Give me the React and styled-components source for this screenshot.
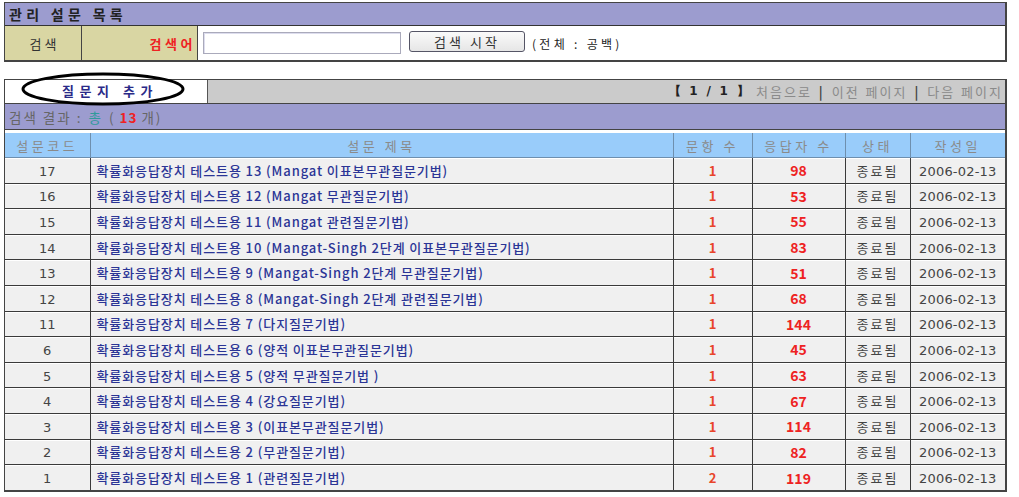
import React from "react";
import styled, { createGlobalStyle } from "styled-components";

const Global = createGlobalStyle`
  html, body { margin: 0; padding: 0; background: #ffffff; }
  body { font-family: "Noto Sans CJK KR", "Noto Sans", sans-serif; font-size: 13px; color: #333; }
`;

const Page = styled.div`
  width: 1019px;
  height: 497px;
  padding: 2px 0 0 4px;
  box-sizing: border-box;
  position: relative;
  display: flex;
  flex-direction: column;
  gap: 17px;
`;

const Box = styled.div`
  width: 1003px;
  box-sizing: border-box;
  border: 1px solid #444;
  border-right-width: 2px;
  border-bottom-width: 2px;
  display: flex;
  flex-direction: column;
`;

const TitleBar = styled.div`
  height: 22px;
  background: #9c9ccf;
  border-bottom: 1px solid #333;
  display: flex;
  align-items: center;
  padding-left: 4px;
  font-weight: 700;
  color: #222;
  font-size: 14px;
  letter-spacing: 4.3px;
`;

const SearchRow = styled.div`
  height: 34px;
  display: flex;
  align-items: center;
  background: #fff;
`;

const LabelCell = styled.div`
  width: ${(p) => p.$w}px;
  height: 100%;
  box-sizing: border-box;
  background: #d9d6a3;
  border-right: 1px solid #444;
  display: flex;
  align-items: center;
  justify-content: ${(p) => (p.$right ? "flex-end" : "center")};
  padding-right: ${(p) => (p.$right ? 1 : 0)}px;
  padding-left: ${(p) => (p.$right ? 0 : 3)}px;
  color: ${(p) => (p.$red ? "#ee2222" : "#333")};
  font-weight: ${(p) => (p.$red ? 700 : 400)};
  letter-spacing: ${(p) => (p.$red ? 3.5 : 3)}px;
`;

const Input = styled.div`
  width: 196px;
  height: 20px;
  margin-left: 5px;
  border: 1px solid #aab;
  box-shadow: inset 1px 1px 0 #dde;
  background: #fff;
`;

const Button = styled.div`
  width: 114px;
  height: 19px;
  margin-left: 8px;
  margin-top: -3px;
  border: 1px solid #556;
  border-radius: 3px;
  background: linear-gradient(#fafafa, #e6e6e6);
  display: flex;
  align-items: center;
  justify-content: center;
  letter-spacing: 3px;
  color: #333;
`;

const Note = styled.span`
  margin-left: 7px;
  font-size: 12px;
  color: #222;
  letter-spacing: 3.3px;
`;

const TabRow = styled.div`
  height: 23px;
  display: flex;
  border-bottom: 1px solid #444;
`;

const AddTab = styled.div`
  width: 203px;
  box-sizing: border-box;
  border-right: 1px solid #555;
  background: #fff;
  display: flex;
  align-items: center;
  justify-content: center;
  padding-left: 8px;
  padding-bottom: 2px;
  font-weight: 700;
  color: #2a2a88;
  letter-spacing: 5.5px;
`;

const Pager = styled.div`
  flex: 1;
  background: #cbcbcb;
  display: flex;
  align-items: center;
  justify-content: flex-end;
  padding-right: 2px;
  color: #8a8a8a;
  font-size: 13px;
  letter-spacing: 2px;
  gap: 7px;
  word-spacing: 1px;
`;

const Bracket = styled.b`
  color: #222;
  font-family: "DejaVu Sans", sans-serif;
  font-size: 12px;
  word-spacing: 4px;
  letter-spacing: 0.3px;
`;

const Sep = styled.b`
  color: #444;
`;

const ResultBar = styled.div`
  height: 25px;
  background: #9c9ccf;
  display: flex;
  align-items: center;
  padding-left: 4px;
  color: #666;
  font-size: 13.5px;
  letter-spacing: 2px;
  border-bottom: 1px solid #444;
`;

const Teal = styled.span`
  color: #2f9a9a;
  margin: 0 6px;
`;

const RedNum = styled.b`
  color: #ee2222;
  margin: 0 4px;
  letter-spacing: 1px;
`;

const Table = styled.table`
  border-collapse: collapse;
  width: 100%;
  margin-top: 3px;
  table-layout: fixed;
`;

const Th = styled.th`
  height: 24px;
  padding: 0;
  background: #99ccfa;
  color: #8a8a8a;
  font-weight: 400;
  font-size: 13px;
  letter-spacing: 3.5px;
  border: 1px solid #6e8fae;
  border-top: none;
  &:first-child { border-left: none; }
  &:last-child { border-right: none; }
`;

const Tr = styled.tr`
  height: 25.6px;
  background: #f0f0f0;
`;

const Td = styled.td`
  padding: 0;
  padding-left: ${(p) => (p.$left ? 6 : 0)}px;
  text-align: ${(p) => (p.$left ? "left" : "center")};
  color: ${(p) => p.$color || "#444"};
  font-weight: ${(p) => (p.$bold ? 700 : 400)};
  font-size: ${(p) => p.$size || 13}px;
  letter-spacing: ${(p) => p.$ls || 0}px;
  border: 1px solid #3a3a3a;
  box-shadow: inset 0 1px 0 #ffffff;
  white-space: nowrap;
  overflow: hidden;
  &:first-child { border-left: none; }
  &:last-child { border-right: none; }
  ${Tr}:last-child & { border-bottom: none; }
`;

const Title = styled.span`
  color: #2b3596;
  font-weight: 500;
  letter-spacing: 0.9px;
`;

const DateText = styled.span`
  font-family: "DejaVu Sans", sans-serif;
  font-size: 13px;
  letter-spacing: 0.2px;
  color: #444;
`;

const Num = styled.span`
  font-family: "DejaVu Sans", sans-serif;
  font-size: 13px;
`;

const Ellipse = styled.svg`
  position: absolute;
  left: 20px;
  top: 71px;
`;

const rows = [
  [17, "확률화응답장치 테스트용 13 (Mangat 이표본무관질문기법)", 1, 98],
  [16, "확률화응답장치 테스트용 12 (Mangat 무관질문기법)", 1, 53],
  [15, "확률화응답장치 테스트용 11 (Mangat 관련질문기법)", 1, 55],
  [14, "확률화응답장치 테스트용 10 (Mangat-Singh 2단계 이표본무관질문기법)", 1, 83],
  [13, "확률화응답장치 테스트용 9 (Mangat-Singh 2단계 무관질문기법)", 1, 51],
  [12, "확률화응답장치 테스트용 8 (Mangat-Singh 2단계 관련질문기법)", 1, 68],
  [11, "확률화응답장치 테스트용 7 (다지질문기법)", 1, 144],
  [6, "확률화응답장치 테스트용 6 (양적 이표본무관질문기법)", 1, 45],
  [5, "확률화응답장치 테스트용 5 (양적 무관질문기법 )", 1, 63],
  [4, "확률화응답장치 테스트용 4 (강요질문기법)", 1, 67],
  [3, "확률화응답장치 테스트용 3 (이표본무관질문기법)", 1, 114],
  [2, "확률화응답장치 테스트용 2 (무관질문기법)", 1, 82],
  [1, "확률화응답장치 테스트용 1 (관련질문기법)", 2, 119],
];

export default function App() {
  return (
    <>
      <Global />
      <Page>
        <Box>
          <TitleBar>관리 설문 목록</TitleBar>
          <SearchRow>
            <LabelCell $w={77}>검색</LabelCell>
            <LabelCell $w={116} $right $red>검색어</LabelCell>
            <Input />
            <Button>검색 시작</Button>
            <Note>(전체 : 공백)</Note>
          </SearchRow>
        </Box>
        <Box>
          <TabRow>
            <AddTab>질문지 추가</AddTab>
            <Pager>
              <Bracket>【 1 / 1 】</Bracket>
              <span>처음으로</span>
              <Sep>|</Sep>
              <span>이전 페이지</span>
              <Sep>|</Sep>
              <span>다음 페이지</span>
            </Pager>
          </TabRow>
          <ResultBar>
            검색 결과 :<Teal>총</Teal>(<RedNum>13</RedNum>개)
          </ResultBar>
          <Table>
            <colgroup>
              <col style={{ width: 85 }} />
              <col style={{ width: 583 }} />
              <col style={{ width: 79 }} />
              <col style={{ width: 93 }} />
              <col style={{ width: 65 }} />
              <col style={{ width: 95 }} />
            </colgroup>
            <thead>
              <tr>
                <Th>설문코드</Th>
                <Th>설문 제목</Th>
                <Th>문항 수</Th>
                <Th>응답자 수</Th>
                <Th>상태</Th>
                <Th>작성일</Th>
              </tr>
            </thead>
            <tbody>
              {rows.map(([code, title, q, n]) => (
                <Tr key={code}>
                  <Td><Num>{code}</Num></Td>
                  <Td $left><Title>{title}</Title></Td>
                  <Td $color="#e8452a" $bold>{q}</Td>
                  <Td $color="#ee2222" $bold $size={14}>{n}</Td>
                  <Td $ls={2}>종료됨</Td>
                  <Td><DateText>2006-02-13</DateText></Td>
                </Tr>
              ))}
            </tbody>
          </Table>
        </Box>
        <Ellipse width="166" height="36" viewBox="0 0 166 36">
          <ellipse cx="83" cy="18" rx="80" ry="15" fill="none" stroke="#000" strokeWidth="3" />
        </Ellipse>
      </Page>
    </>
  );
}
